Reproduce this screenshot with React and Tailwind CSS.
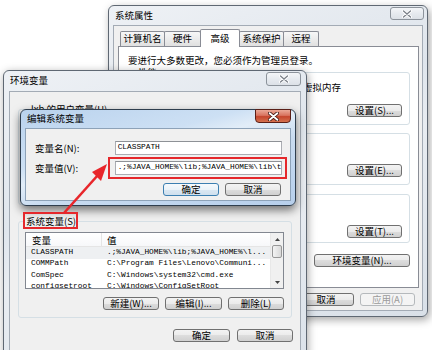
import React from "react";

const X_PATH = "M1.5 1L8.5 7M8.5 1L1.5 7";

function CloseBtn({ active = false, className = "" }) {
  if (active) {
    return (
      <div className={`absolute flex items-center justify-center border border-[#5a1f17] rounded-b-[4px] rounded-t-[1px] bg-[linear-gradient(#eba897_0%,#d9745f_45%,#c5452c_55%,#d4714f_100%)] ${className}`}>
        <svg width="11" height="9" viewBox="0 0 10 8">
          <path d={X_PATH} stroke="#3d1510" strokeWidth="3.2" strokeLinecap="round" fill="none" />
          <path d={X_PATH} stroke="#ffffff" strokeWidth="1.7" strokeLinecap="round" fill="none" />
        </svg>
      </div>
    );
  }
  return (
    <div className={`absolute flex items-center justify-center border border-[#8c939b] rounded-[3px] bg-[linear-gradient(#f3f5f8_0%,#e6eaef_50%,#dce1e7_100%)] ${className}`}>
      <svg width="10" height="8" viewBox="0 0 10 8">
        <path d={X_PATH} stroke="#ffffff" strokeWidth="3" strokeLinecap="round" fill="none" />
        <path d={X_PATH} stroke="#7a8089" strokeWidth="1.3" strokeLinecap="round" fill="none" />
      </svg>
    </div>
  );
}

function Btn({ children, className = "", variant = "normal" }) {
  const v =
    variant === "default"
      ? "border-[#3c7fb1] bg-[linear-gradient(#f6fafd_0%,#ebf3f9_50%,#dbe8f3_50%,#cfe0ee_100%)] text-black"
      : variant === "disabled"
      ? "border-[#b5b9bc] bg-[#f4f4f4] text-[#9b9b9b]"
      : "border-[#707070] bg-[linear-gradient(#f3f3f3_0%,#ebebeb_50%,#dddddd_50%,#d0d0d0_100%)] text-black";
  return (
    <div className={`flex h-[13px] shrink-0 items-center justify-center rounded-[3px] border text-[9.5px] leading-none ${v} ${className}`}>
      {children}
    </div>
  );
}

function Group({ label, labelBg = "bg-white", labelLeft = "left-[10px]", className = "", children }) {
  return (
    <div className={`relative rounded-[3px] border border-[#d5dfe5] ${className}`}>
      <span className={`absolute top-[-7px] px-[2px] leading-[12px] ${labelLeft} ${labelBg}`}>{label}</span>
      {children}
    </div>
  );
}

function Tab({ children, selected = false, className = "" }) {
  return (
    <div
      className={`flex items-center justify-center border border-b-0 border-[#898c95] rounded-t-[2px] text-[9.5px] leading-none ${
        selected ? "relative z-10 h-[18px] mb-[-1px] bg-white" : "h-[15px] bg-[linear-gradient(#f7f7f7_0%,#ececec_50%,#e0e0e0_100%)]"
      } ${className}`}
    >
      {children}
    </div>
  );
}

function Input({ children }) {
  return (
    <div className="flex h-[14px] w-[168px] items-center overflow-hidden border border-[#abadb3] border-t-[#8e9196] bg-white pl-[2px] font-['Liberation_Mono',monospace] text-[7.8px] leading-none whitespace-nowrap">
      {children}
    </div>
  );
}

const rows = [
  ["CLASSPATH", ".;%JAVA_HOME%\\lib;%JAVA_HOME%\\l...", true],
  ["COMMPath", "C:\\Program Files\\Lenovo\\Communi...", false],
  ["ComSpec", "C:\\Windows\\system32\\cmd.exe", false],
  ["configsetroot", "C:\\Windows\\ConfigSetRoot", false],
];

function SysProps() {
  return (
    <div className="absolute left-[108px] top-[5px] flex h-[312px] w-[320px] flex-col rounded-[6px] border border-[#5f6873] bg-[linear-gradient(160deg,#eef1f5_0%,#dfe5ec_40%,#e8ecf1_55%,#d9e0e8_100%)] shadow-[2px_3px_8px_rgba(0,0,0,0.35)]">
      <div className="relative flex h-[19px] shrink-0 items-center pl-[6px] text-[9.5px] leading-none">
        系统属性
        <CloseBtn className="right-[3px] top-[1px] h-[13px] w-[34px]" />
      </div>
      <div className="mx-[4px] flex h-[286px] flex-col border border-[#a3abb5] bg-[#f0f0f0] px-[4px] pt-[3px]">
        <div className="flex h-[17px] items-end pl-[2px]">
          <Tab className="w-[45px]">计算机名</Tab>
          <Tab className="ml-[-1px] w-[37px]">硬件</Tab>
          <Tab selected className="ml-[-1px] w-[40px]">高级</Tab>
          <Tab className="ml-[-1px] w-[45px]">系统保护</Tab>
          <Tab className="ml-[-1px] w-[36px]">远程</Tab>
        </div>
        <div className="flex h-[242px] w-[301px] flex-col border border-[#898c95] bg-white pl-[6px] pt-[7px] text-[9.5px] leading-[12px]">
          <div className="pl-[3px]">要进行大多数更改，您必须作为管理员登录。</div>
          <Group label="性能" className="mt-[6px] flex h-[53px] w-[285px] flex-col justify-between pb-[7px] pl-[6px] pr-[7px] pt-[8px]">
            <div className="whitespace-nowrap">视觉效果，处理器计划，内存使用，以及虚拟内存</div>
            <Btn className="w-[55px] self-end">设置(S)...</Btn>
          </Group>
          <Group label="用户配置文件" className="mt-[8px] flex h-[52px] w-[285px] flex-col justify-between pb-[7px] pl-[6px] pr-[7px] pt-[8px]">
            <div className="whitespace-nowrap">与登录有关的桌面设置</div>
            <Btn className="w-[55px] self-end">设置(E)...</Btn>
          </Group>
          <Group label="启动和故障恢复" className="mt-[9px] flex h-[49px] w-[285px] flex-col justify-between pb-[4px] pl-[6px] pr-[7px] pt-[8px]">
            <div className="whitespace-nowrap">系统启动、系统失败和调试信息</div>
            <Btn className="w-[55px] self-end">设置(T)...</Btn>
          </Group>
          <div className="mt-[11px] flex w-[285px] justify-end">
            <Btn className="w-[96px]">环境变量(N)...</Btn>
          </div>
        </div>
        <div className="mt-[5px] flex justify-end gap-[6px] pr-[3px]">
          <Btn className="w-[56px]">确定</Btn>
          <Btn className="w-[56px]">取消</Btn>
          <Btn variant="disabled" className="w-[55px]">应用(A)</Btn>
        </div>
      </div>
    </div>
  );
}

function EnvVars() {
  return (
    <div className="absolute left-[3px] top-[70px] flex h-[292px] w-[304px] flex-col rounded-[6px] border border-[#5f6873] bg-[linear-gradient(160deg,#eef1f5_0%,#e0e6ed_40%,#e9edf2_55%,#dbe2ea_100%)] shadow-[1px_2px_8px_rgba(0,0,0,0.35)]">
      <div className="relative flex h-[20px] shrink-0 items-center pl-[6px] text-[9.5px] leading-none">
        环境变量
        <CloseBtn className="right-[5px] top-[1px] h-[14px] w-[35px]" />
      </div>
      <div className="mx-[5px] flex h-[268px] flex-col border border-[#a3abb5] bg-[#f0f0f0] pl-[8px] pt-[17px] text-[9.5px] leading-[12px]">
        <Group label="lxb 的用户变量(U)" labelBg="bg-[#f0f0f0]" labelLeft="left-[10px]" className="h-[96px] w-[274px]" />
        <Group label="系统变量(S)" labelBg="bg-[#f0f0f0]" labelLeft="left-[5px]" className="mt-[16px] flex h-[97px] w-[274px] flex-col pl-[6px] pt-[10px]">
          <div className="flex h-[57px] w-[259px] overflow-hidden border border-[#828790] bg-white">
            <div className="flex min-w-0 flex-1 flex-col">
              <div className="flex h-[14px] shrink-0 items-center border-b border-[#e5e5e5] bg-[linear-gradient(#ffffff_0%,#f7f8fa_100%)]">
                <div className="flex h-full w-[76px] items-center border-r border-[#e5e5e5] pl-[6px]">变量</div>
                <div className="pl-[5px]">值</div>
              </div>
              {rows.map(([k, v, sel]) => (
                <div
                  key={k}
                  className={`flex h-[11.5px] shrink-0 items-center font-['Liberation_Mono',monospace] text-[7.8px] leading-none whitespace-nowrap ${sel ? "bg-[#eef0f2]" : ""}`}
                >
                  <div className="w-[76px] pl-[5px]">{k}</div>
                  <div className="pl-[5px]">{v}</div>
                </div>
              ))}
            </div>
            <div className="flex w-[13px] shrink-0 flex-col border-l border-[#e8e8e8] bg-[#f0f0f0]">
              <div className="flex h-[12px] items-center justify-center">
                <svg width="5" height="3" viewBox="0 0 5 3"><path d="M0 3L2.5 0L5 3Z" fill="#444" /></svg>
              </div>
              <div className="mx-[1px] h-[13px] rounded-[2px] border border-[#979797] bg-[linear-gradient(90deg,#f3f3f3_0%,#e6e6e6_50%,#d9d9d9_100%)]" />
              <div className="flex-1" />
              <div className="flex h-[11px] items-center justify-center">
                <svg width="5" height="3" viewBox="0 0 5 3"><path d="M0 0L2.5 3L5 0Z" fill="#444" /></svg>
              </div>
            </div>
          </div>
          <div className="mt-[8px] flex w-[259px] justify-end gap-[6px]">
            <Btn className="w-[56px]">新建(W)...</Btn>
            <Btn className="w-[57px]">编辑(I)...</Btn>
            <Btn className="w-[56px]">删除(L)</Btn>
          </div>
        </Group>
        <div className="mt-[11px] flex w-[275px] justify-end gap-[7px]">
          <Btn className="w-[57px]">确定</Btn>
          <Btn className="w-[56px]">取消</Btn>
        </div>
      </div>
    </div>
  );
}

function EditVar() {
  return (
    <div className="absolute left-[20px] top-[109px] flex h-[97px] w-[276px] flex-col rounded-[6px] border border-[#2f3e4e] bg-[linear-gradient(165deg,#b9d2ed_0%,#cde0f4_35%,#e2edf8_45%,#c8dbf0_60%,#b7cfeb_100%)] shadow-[0_4px_10px_rgba(0,0,0,0.55)]">
      <div className="relative flex h-[18px] shrink-0 items-center pl-[6px] text-[9.5px] leading-none">
        编辑系统变量
        <CloseBtn active className="right-[4px] top-[-1px] h-[14px] w-[36px]" />
      </div>
      <div className="mx-[4px] flex h-[73px] flex-col border border-[#8da2b8] bg-[#f0f0f0] pl-[9px] pr-[8px] pt-[12px] text-[9.5px] leading-[12px]">
        <div className="flex items-center">
          <div className="w-[80px]">变量名(N):</div>
          <Input>CLASSPATH</Input>
        </div>
        <div className="mt-[6px] flex items-center">
          <div className="w-[80px]">变量值(V):</div>
          <Input>{".;%JAVA_HOME%\\lib;%JAVA_HOME%\\lib\\tools.jar"}</Input>
        </div>
        <div className="mt-[8px] flex justify-end gap-[6px] pr-[1px]">
          <Btn variant="default" className="w-[56px]">确定</Btn>
          <Btn className="w-[56px]">取消</Btn>
        </div>
      </div>
    </div>
  );
}

export default function App() {
  return (
    <div className="relative h-[350px] w-[432px] overflow-hidden bg-white font-['Noto_Sans_CJK_SC',sans-serif] text-black">
      <SysProps />
      <EnvVars />
      <EditVar />
      {/* annotations */}
      <div className="absolute left-[108px] top-[157px] h-[22px] w-[179px] border-2 border-[#e5282c]" />
      <div className="absolute left-[23px] top-[212px] h-[17px] w-[55px] border-2 border-[#e5282c]" />
      <svg className="pointer-events-none absolute left-0 top-0" width="432" height="350" viewBox="0 0 432 350">
        <line x1="64" y1="213" x2="98" y2="175" stroke="#e8262b" strokeWidth="2.6" />
        <polygon points="107,164 101,181 92,172" fill="#e8262b" />
      </svg>
    </div>
  );
}
